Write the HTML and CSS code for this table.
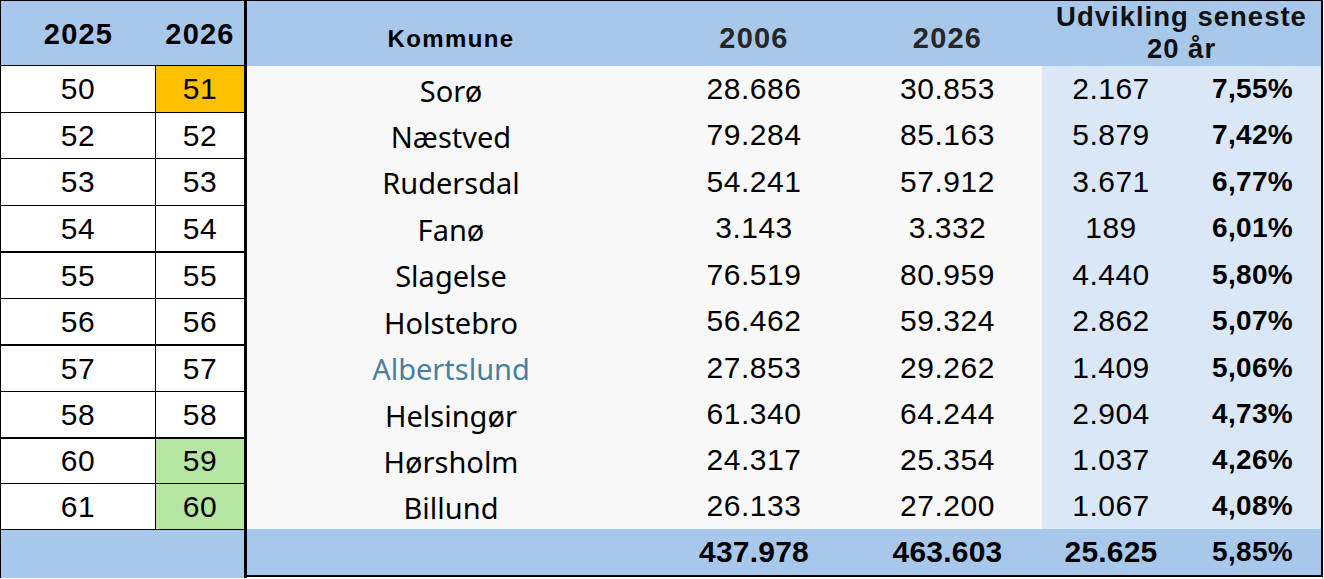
FILE: index.html
```html
<!DOCTYPE html>
<html lang="da">
<head>
<meta charset="utf-8">
<title>Kommuner</title>
<link rel="stylesheet" href="styles.css">
</head>
<body>
<div class="sheet">
  <div class="rank">
    <div class="rrow rhead"><div class="c1">2025</div><div class="c2">2026</div></div>
    <div class="rrow h46"><div class="c1">50</div><div class="c2 orange">51</div></div>
    <div class="rrow h46 line"><div class="c1">52</div><div class="c2">52</div></div>
    <div class="rrow h47 line"><div class="c1">53</div><div class="c2">53</div></div>
    <div class="rrow h46 line"><div class="c1">54</div><div class="c2">54</div></div>
    <div class="rrow h47 thick"><div class="c1">55</div><div class="c2">55</div></div>
    <div class="rrow h46 line"><div class="c1">56</div><div class="c2">56</div></div>
    <div class="rrow h47 thick"><div class="c1">57</div><div class="c2">57</div></div>
    <div class="rrow h46 line"><div class="c1">58</div><div class="c2">58</div></div>
    <div class="rrow h46 thick"><div class="c1">60</div><div class="c2 green">59</div></div>
    <div class="rrow h46 line"><div class="c1">61</div><div class="c2 green">60</div></div>
    <div class="rrow rtotal"><div class="c1"></div><div class="c2"></div></div>
  </div>
  <div class="data">
    <div class="drow dhead">
      <div class="k khead">Kommune</div>
      <div class="n yhead">2006</div>
      <div class="n yhead">2026</div>
      <div class="uhead">Udvikling seneste<br>20 år</div>
    </div>
    <div class="drow h46"><div class="k">Sorø</div><div class="n">28.686</div><div class="n">30.853</div><div class="n u">2.167</div><div class="p u">7,55%</div></div>
    <div class="drow h46"><div class="k">Næstved</div><div class="n">79.284</div><div class="n">85.163</div><div class="n u">5.879</div><div class="p u">7,42%</div></div>
    <div class="drow h47"><div class="k">Rudersdal</div><div class="n">54.241</div><div class="n">57.912</div><div class="n u">3.671</div><div class="p u">6,77%</div></div>
    <div class="drow h46"><div class="k">Fanø</div><div class="n">3.143</div><div class="n">3.332</div><div class="n u">189</div><div class="p u">6,01%</div></div>
    <div class="drow h47"><div class="k">Slagelse</div><div class="n">76.519</div><div class="n">80.959</div><div class="n u">4.440</div><div class="p u">5,80%</div></div>
    <div class="drow h46"><div class="k">Holstebro</div><div class="n">56.462</div><div class="n">59.324</div><div class="n u">2.862</div><div class="p u">5,07%</div></div>
    <div class="drow h47"><div class="k link">Albertslund</div><div class="n">27.853</div><div class="n">29.262</div><div class="n u">1.409</div><div class="p u">5,06%</div></div>
    <div class="drow h46"><div class="k">Helsingør</div><div class="n">61.340</div><div class="n">64.244</div><div class="n u">2.904</div><div class="p u">4,73%</div></div>
    <div class="drow h46"><div class="k">Hørsholm</div><div class="n">24.317</div><div class="n">25.354</div><div class="n u">1.037</div><div class="p u">4,26%</div></div>
    <div class="drow h46"><div class="k">Billund</div><div class="n">26.133</div><div class="n">27.200</div><div class="n u">1.067</div><div class="p u">4,08%</div></div>
    <div class="drow dtotal"><div class="k"></div><div class="n b">437.978</div><div class="n b">463.603</div><div class="n b">25.625</div><div class="p">5,85%</div></div>
  </div>
</div>
</body>
</html>
```
FILE: styles.css
```css
html, body {
  margin: 0;
  padding: 0;
  background: #ffffff;
}
body {
  width: 1324px;
  height: 579px;
  overflow: hidden;
  font-family: "Liberation Sans", Arial, sans-serif;
  color: #000;
}
.sheet {
  display: flex;
  align-items: flex-start;
}
/* left ranking block */
.rank {
  width: 247px;
  box-sizing: border-box;
  border-left: 1px solid #000;
  border-right: 3px solid #000;
  display: flex;
  flex-direction: column;
}
.rrow {
  display: grid;
  grid-template-columns: 155px 88px;
  box-sizing: border-box;
  background: #fff;
}
.rrow > div {
  display: flex;
  align-items: center;
  justify-content: center;
  font-size: 30px;
  letter-spacing: 0.5px;
}
.rrow .c1 {
  border-right: 1px solid #000;
}
.rhead {
  height: 66px;
  border-top: 1px solid #000;
  border-bottom: 1px solid #000;
  background: #a8c8eb;
}
.rhead > div {
  font-weight: bold;
  font-size: 29px;
  letter-spacing: 1.2px;
  padding-top: 3px;
}
.rhead .c1 { border-right: none; }
.h46 { height: 46px; }
.h47 { height: 47px; }
.line { border-top: 1px solid #000; }
.thick { border-top: 2px solid #000; }
.orange { background: #ffc000; }
.green { background: #b5e6a2; }
.rtotal {
  height: 49px;
  border-top: 1px solid #000;
  background: #a8c8eb;
}
.rrow.rtotal .c1 { border-right: none; }

/* right data table */
.data {
  width: 1076px;
  box-sizing: border-box;
  border-top: 1px solid #000;
  border-right: 2px solid #000;
  display: flex;
  flex-direction: column;
}
.drow {
  display: grid;
  grid-template-columns: 408px 198px 189px 138px 141px;
  background: #f8f8f8;
  box-sizing: border-box;
}
.drow > div {
  display: flex;
  align-items: center;
}
.k {
  justify-content: center;
  font-family: "Noto Sans", "Liberation Sans", sans-serif;
  font-size: 29px;
  padding-top: 2px;
}
.n {
  justify-content: center;
  font-size: 30px;
  letter-spacing: 0.5px;
}
.p {
  justify-content: flex-end;
  padding-right: 28px;
  font-weight: bold;
  font-size: 28px;
  letter-spacing: 0.3px;
}
.u { background: #dae7f7; }
.link { color: #4a7f9c; }
.dhead {
  height: 65px;
  background: #a8c8eb;
  grid-template-columns: 408px 198px 189px 279px;
}
.khead {
  font-family: "Liberation Sans", Arial, sans-serif;
  font-weight: bold;
  font-size: 24px;
  letter-spacing: 1.4px;
  padding-top: 4px;
}
.yhead {
  font-weight: bold;
  font-size: 29px;
  letter-spacing: 1.2px;
  color: #262626;
  padding-top: 3px;
}
.drow .uhead {
  justify-content: center;
  text-align: center;
  font-weight: bold;
  font-size: 27.5px;
  letter-spacing: 1px;
  line-height: 32px;
  color: #111;
  padding-bottom: 7px;
}
.dtotal {
  height: 48px;
  background: #a8c8eb;
  border-bottom: 2px solid #000;
}
.b {
  font-weight: bold;
  letter-spacing: 0.2px;
}
```
